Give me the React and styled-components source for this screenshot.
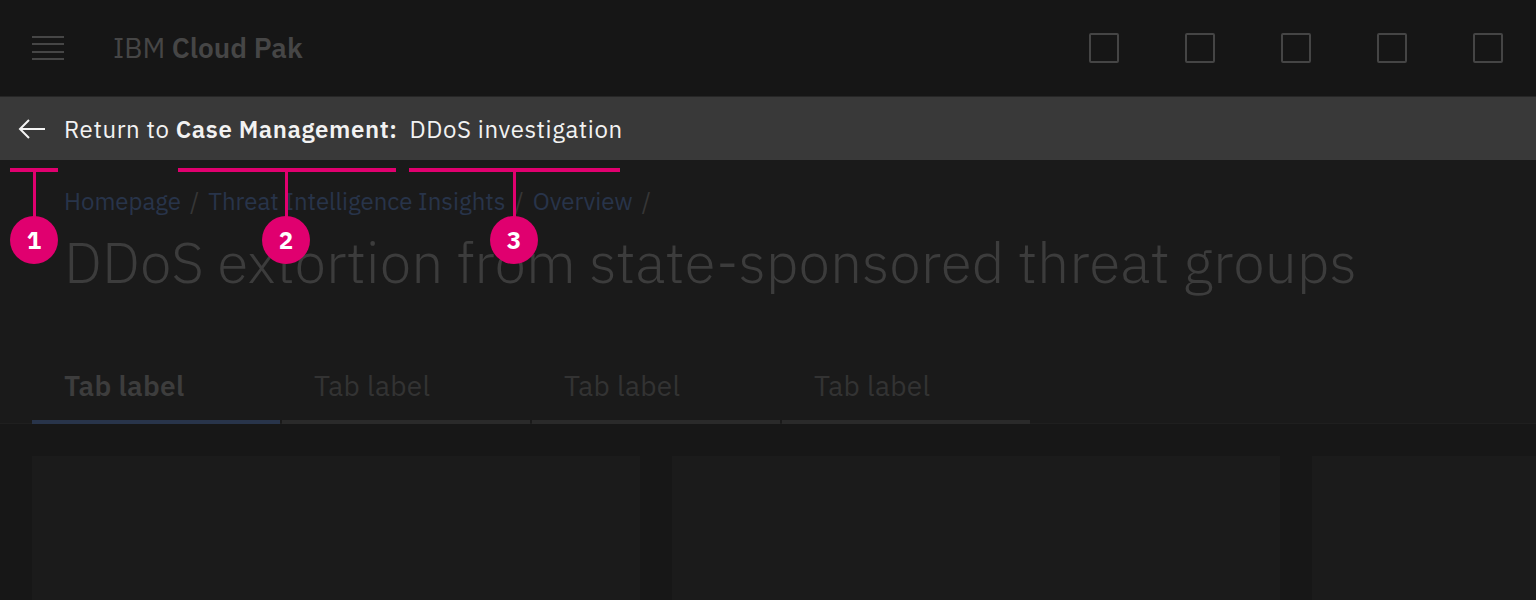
import React from "react";
import styled, { createGlobalStyle } from "styled-components";

const GlobalStyle = createGlobalStyle`
  html, body {
    margin: 0;
    padding: 0;
    background: #171717;
  }
  body {
    font-family: "IBM Plex Sans", Roboto, "Noto Sans", sans-serif;
    overflow: hidden;
  }
  * {
    box-sizing: border-box;
  }
`;

const headerIcons = [0, 1, 2, 3, 4];
const tabs = ["Tab label", "Tab label", "Tab label", "Tab label"];
const crumbs = ["Homepage", "Threat Intelligence Insights", "Overview"];

// Callout markers laid over the page (x positions of the brackets and dots).
const callouts = [
  { n: 1, left: 10, width: 48, dot: 34 },
  { n: 2, left: 178, width: 218, dot: 286 },
  { n: 3, left: 409, width: 211, dot: 514 },
];

function App() {
  return (
    <Page>
      <GlobalStyle />
      {/** Top shell header */}
      <Header>
        <Hamburger width="32" height="24" viewBox="0 0 32 24">
          <rect x="0" y="0" width="32" height="2" />
          <rect x="0" y="7" width="32" height="2" />
          <rect x="0" y="15" width="32" height="2" />
          <rect x="0" y="22" width="32" height="2" />
        </Hamburger>
        <Brand>
          IBM <strong>Cloud Pak</strong>
        </Brand>
        <HeaderActions>
          {headerIcons.map((i) => (
            <IconSlot key={i} />
          ))}
        </HeaderActions>
      </Header>

      {/** Return bar */}
      <ReturnBar>
        <Arrow width="28" height="20" viewBox="0 0 28 20">
          <path d="M27 10H2M11 1L2 10l9 9" />
        </Arrow>
        <ReturnText>
          Return to <Bold>Case Management:</Bold>DDoS investigation
        </ReturnText>
      </ReturnBar>

      {/** Page header */}
      <PageHeader>
        <Breadcrumb>
          {crumbs.map((c) => (
            <React.Fragment key={c}>
              <Crumb>{c}</Crumb>
              <Slash>/</Slash>
            </React.Fragment>
          ))}
        </Breadcrumb>
        <Title>DDoS extortion from state-sponsored threat groups</Title>
        <TabList>
          {tabs.map((t, i) => (
            <Tab key={i} active={i === 0}>
              {t}
            </Tab>
          ))}
        </TabList>
      </PageHeader>

      {/** Content */}
      <Content>
        <Card />
        <Card />
        <Card />
      </Content>

      {/** Callouts */}
      {callouts.map((c) => (
        <React.Fragment key={c.n}>
          <Bracket style={{ left: c.left, width: c.width }} />
          <Stem style={{ left: c.dot - 1.5 }} />
          <Dot style={{ left: c.dot - 24 }}>{c.n}</Dot>
        </React.Fragment>
      ))}
    </Page>
  );
}

/**
 * Styling.
 */
const Page = styled.div`
  position: relative;
  width: 1536px;
  height: 600px;
  overflow: hidden;
  background: #171717;
`;
const Header = styled.header`
  display: flex;
  align-items: center;
  height: 96px;
  padding: 0 33px 0 32px;
  background: #161616;
`;
const Hamburger = styled.svg`
  fill: #464646;
  flex-shrink: 0;
`;
const Brand = styled.div`
  margin-left: 49px;
  margin-top: -2px;
  font-size: 28px;
  color: #464646;
  strong {
    font-weight: 600;
  }
`;
const HeaderActions = styled.div`
  display: flex;
  gap: 66px;
  margin-left: auto;
`;
const IconSlot = styled.div`
  width: 30px;
  height: 30px;
  border: 2px solid #454545;
  border-radius: 2px;
`;
const ReturnBar = styled.div`
  display: flex;
  align-items: center;
  height: 64px;
  padding-left: 18px;
  background: #393939;
  border-top: 1px solid #262626;
`;
const Arrow = styled.svg`
  fill: none;
  stroke: #f4f4f4;
  stroke-width: 2;
  flex-shrink: 0;
`;
const ReturnText = styled.div`
  margin-left: 18px;
  font-size: 24px;
  color: #f2f2f2;
  letter-spacing: 0.6px;
`;
const Bold = styled.span`
  font-weight: 600;
  margin-right: 12px;
`;
const PageHeader = styled.section`
  padding-top: 25px;
  background: #1a1a1a;
  box-shadow: inset 0 -1px #1f1f1f;
`;
const Breadcrumb = styled.nav`
  display: flex;
  align-items: center;
  gap: 9px;
  padding-left: 64px;
  font-size: 24px;
  line-height: 32px;
`;
const Crumb = styled.span`
  color: #28344a;
`;
const Slash = styled.span`
  color: #363636;
`;
const Title = styled.h1`
  margin: 9px 0 0;
  padding-left: 64px;
  font-size: 57px;
  line-height: 72px;
  font-weight: 300;
  color: #3c3c3c;
`;
const TabList = styled.div`
  display: flex;
  gap: 2px;
  margin-top: 72px;
  padding-left: 32px;
`;
const Tab = styled.div`
  width: 248px;
  padding: 0 32px 18px;
  font-size: 28px;
  line-height: 32px;
  letter-spacing: 0.3px;
  font-weight: ${(p) => (p.active ? 600 : 400)};
  color: ${(p) => (p.active ? "#3d3d3d" : "#333333")};
  border-bottom: 4px solid ${(p) => (p.active ? "#28344a" : "#2a2a2a")};
`;
const Content = styled.main`
  display: grid;
  grid-template-columns: repeat(3, 608px);
  gap: 32px;
  padding: 32px 0 0 32px;
  background: #171717;
`;
const Card = styled.div`
  height: 300px;
  background: #1b1b1b;
`;
const Bracket = styled.div`
  position: absolute;
  top: 168px;
  height: 4px;
  background: #e0006f;
`;
const Stem = styled.div`
  position: absolute;
  top: 170px;
  width: 3px;
  height: 48px;
  background: #e0006f;
`;
const Dot = styled.div`
  position: absolute;
  top: 216px;
  display: flex;
  align-items: center;
  justify-content: center;
  width: 48px;
  height: 48px;
  border-radius: 50%;
  background: #e0006f;
  color: #ffffff;
  font-size: 24px;
  font-weight: 700;
`;

export default App;
